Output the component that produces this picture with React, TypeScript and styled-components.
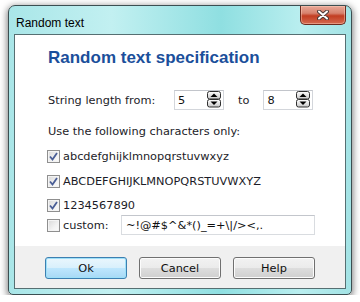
import React from 'react';
import styled, { createGlobalStyle } from 'styled-components';

const Global = createGlobalStyle`
	body {
		margin: 0;
		background: #ffffff;
		font-family: 'DejaVu Sans', Verdana, sans-serif;
	}
`;

const Window = styled.div`
	margin: 5px 0 0 8px;
	width: 344px;
	height: 290px;
	box-sizing: border-box;
	border: 1px solid #3c4f52;
	border-radius: 7px 7px 5px 5px;
	background: linear-gradient(to right, #a9e6e8 0%, #c2f0f1 30%, #8fdfe1 62%, #b9eeef 85%, #a3e3e5 100%);
	box-shadow: 0 2px 7px 1px rgba(0, 0, 0, 0.5);
	display: flex;
	flex-direction: column;
	padding: 0 5px 5px 5px;
`;

const TitleBar = styled.div`
	height: 28px;
	display: flex;
	align-items: flex-start;
	justify-content: space-between;
	.title {
		font-family: 'Liberation Sans', Arial, sans-serif;
		font-size: 12px;
		color: #000;
		margin: 10px 0 0 2px;
	}
`;

const CloseButton = styled.div`
	width: 46px;
	height: 19px;
	margin-right: 0;
	box-sizing: border-box;
	border: 1px solid #6b2a1f;
	border-top: none;
	border-radius: 0 0 5px 5px;
	background: linear-gradient(to bottom, #e9a898 0%, #d7826e 40%, #c23d22 55%, #d56a50 100%);
	box-shadow: inset 0 0 0 1px rgba(255, 210, 190, 0.45);
	display: flex;
	align-items: center;
	justify-content: center;
`;

const Client = styled.div`
	flex: 1;
	border: 1px solid #566f72;
	display: flex;
	flex-direction: column;
	background: #ffffff;
`;

const Content = styled.div`
	flex: 1;
	padding: 13px 0 0 33px;
	display: flex;
	flex-direction: column;
	font-size: 11.33px;
	line-height: 14px;
	color: #1c1c28;
`;

const Heading = styled.h1`
	margin: 0;
	font-family: 'Liberation Sans', Arial, sans-serif;
	font-size: 17px;
	line-height: 20px;
	font-weight: bold;
	color: #1b4f9b;
`;

const LengthRow = styled.div`
	margin-top: 22px;
	display: flex;
	align-items: center;
	height: 20px;
	.from {
		width: 126px;
	}
	.to {
		margin: 0 14px;
	}
`;

const SpinBox = styled.div`
	width: 50px;
	height: 20px;
	box-sizing: border-box;
	border: 1px solid #d3d6db;
	border-top-color: #c2c5cb;
	display: flex;
	align-items: center;
	justify-content: space-between;
	padding: 0 2px 1px 3px;
	color: #101010;
`;

const Text = styled.div<{ $top: number }>`
	margin-top: ${p => p.$top}px;
	height: 14px;
	display: flex;
	align-items: center;
`;

const CheckRow = styled.label<{ $top: number; $tall?: boolean }>`
	margin-top: ${p => p.$top}px;
	margin-left: -1px;
	height: ${p => (p.$tall ? 20 : 14)}px;
	display: flex;
	align-items: center;
	gap: 3px;
	.name {
		width: ${p => (p.$tall ? '55px' : 'auto')};
	}
`;

const Box = styled.span`
	width: 13px;
	height: 13px;
	box-sizing: border-box;
	border: 1px solid #8f8f8f;
	background: linear-gradient(135deg, #d8d8d8 0%, #f2f2f2 60%, #fbfbfb 100%);
	box-shadow: inset 0 0 0 1px #f4f4f4;
	display: flex;
	align-items: center;
	justify-content: center;
`;

const CustomInput = styled.div`
	width: 194px;
	height: 20px;
	box-sizing: border-box;
	border: 1px solid #d9dce0;
	border-top-color: #c3c6cc;
	padding-left: 4px;
	display: flex;
	align-items: center;
	color: #101010;
`;

const Footer = styled.div`
	height: 42px;
	background: #f0f0f0;
	display: flex;
	justify-content: center;
	align-items: center;
	gap: 12px;
	padding-top: 1px;
	box-sizing: border-box;
`;

const Button = styled.div<{ $primary?: boolean }>`
	width: 82px;
	height: 22px;
	box-sizing: border-box;
	border-radius: 3px;
	border: 1px solid ${p => (p.$primary ? '#3c7fb1' : '#707070')};
	background: ${p =>
		p.$primary
			? 'linear-gradient(to bottom, #eaf6fd 0%, #d9f0fc 48%, #bee6fd 52%, #a7d9f5 100%)'
			: 'linear-gradient(to bottom, #f2f2f2 0%, #ebebeb 48%, #dddddd 52%, #cfcfcf 100%)'};
	box-shadow: inset 0 0 0 1px ${p => (p.$primary ? '#9ee0f8' : '#fcfcfc')};
	font-size: 11.33px;
	color: #101010;
	display: flex;
	align-items: center;
	justify-content: center;
`;

const Spinner = () => (
	<svg width='14' height='17' viewBox='0 0 14 17'>
		<defs>
			<linearGradient id='sg' x1='0' y1='0' x2='0' y2='1'>
				<stop offset='0' stopColor='#ffffff' />
				<stop offset='1' stopColor='#c8c8c8' />
			</linearGradient>
		</defs>
		<rect x='0.5' y='0.5' width='13' height='7.5' rx='2' fill='url(#sg)' stroke='#303030' />
		<rect x='0.5' y='8.5' width='13' height='7.5' rx='2' fill='url(#sg)' stroke='#303030' />
		<polygon points='3.5,6 10.5,6 7,2.5' fill='#000' />
		<polygon points='3.5,10.5 10.5,10.5 7,14' fill='#000' />
	</svg>
);

const Check = ({ on }: { on: boolean }) => (
	<Box>
		{on && (
			<svg width='9' height='9' viewBox='0 0 9 9'>
				<path d='M1 4.5 L3.5 7.5 L8 1' fill='none' stroke='#4a5e96' strokeWidth='1.8' />
			</svg>
		)}
	</Box>
);

export default function App() {
	return (
		<>
			<Global />
			<Window>
				<TitleBar>
					<span className='title'>Random text</span>
					<CloseButton>
						<svg width='12' height='10' viewBox='0 0 12 10'>
							<path d='M2 1.5 L10 8.5 M10 1.5 L2 8.5' stroke='#4a3a38' strokeWidth='4' strokeLinecap='round' />
							<path d='M2 1.5 L10 8.5 M10 1.5 L2 8.5' stroke='#ffffff' strokeWidth='2' strokeLinecap='round' />
						</svg>
					</CloseButton>
				</TitleBar>
				<Client>
					<Content>
						<Heading>Random text specification</Heading>
						<LengthRow>
							<span className='from'>String length from:</span>
							<SpinBox>
								<span>5</span>
								<Spinner />
							</SpinBox>
							<span className='to'>to</span>
							<SpinBox>
								<span>8</span>
								<Spinner />
							</SpinBox>
						</LengthRow>
						<Text $top={14}>Use the following characters only:</Text>
						<CheckRow $top={11}>
							<Check on />
							<span className='name'>abcdefghijklmnopqrstuvwxyz</span>
						</CheckRow>
						<CheckRow $top={11}>
							<Check on />
							<span className='name'>ABCDEFGHIJKLMNOPQRSTUVWXYZ</span>
						</CheckRow>
						<CheckRow $top={10}>
							<Check on />
							<span className='name'>1234567890</span>
						</CheckRow>
						<CheckRow $top={3} $tall>
							<Check on={false} />
							<span className='name'>custom:</span>
							<CustomInput>~!@#$^&amp;*()_=+\|/&gt;&lt;,.</CustomInput>
						</CheckRow>
					</Content>
					<Footer>
						<Button $primary>Ok</Button>
						<Button>Cancel</Button>
						<Button>Help</Button>
					</Footer>
				</Client>
			</Window>
		</>
	);
}
